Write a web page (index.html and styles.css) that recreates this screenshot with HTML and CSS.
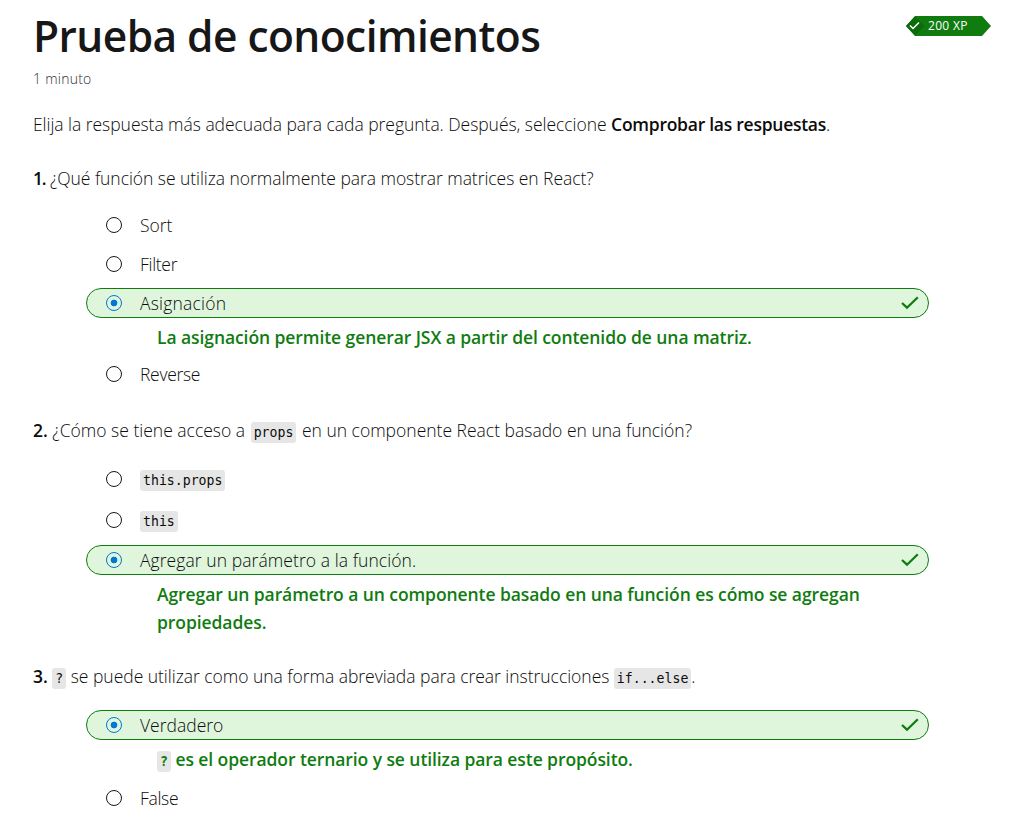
FILE: index.html
```html
<!DOCTYPE html>
<html lang="es">
<head>
<meta charset="utf-8">
<title>Prueba de conocimientos</title>
<link rel="stylesheet" href="styles.css">
</head>
<body>
<main class="page">
  <header class="head">
    <h1 class="title">Prueba de conocimientos</h1>
    <div class="xp">
      <svg class="xp-shape" width="85" height="20" viewBox="0 0 85 20"><path d="M9 0H76L85 10L76 20H9L0 10Z" fill="#107c10"/><path d="M9 0.500L18.500 10L9 19.500L0 10Z" fill="#0b6a0b"/><path d="M4 9.500L7 12.500L13 6.500" fill="none" stroke="#fff" stroke-width="1.500"/></svg>
      <span class="xp-label">200 XP</span>
    </div>
  </header>
  <p class="time">1 minuto</p>
  <p class="intro">Elija la respuesta más adecuada para cada pregunta. Después, seleccione <b class="action">Comprobar las respuestas</b>.</p>

  <section class="question q1">
    <p class="ask"><b class="number">1.</b> ¿Qué función se utiliza normalmente para mostrar matrices en React?</p>
    <div class="option"><i class="radio"></i><span>Sort</span></div>
    <div class="option"><i class="radio"></i><span class="tight">Filter</span></div>
    <div class="option correct"><i class="radio on"></i><span class="wide">Asignación</span><svg class="tick" width="18" height="14" viewBox="0 0 18 14"><path d="M1 7L6 11.700L16.800 1.200" fill="none" stroke="#107c10" stroke-width="2.300"/></svg></div>
    <p class="feedback">La asignación permite generar JSX a partir del contenido de una matriz.</p>
    <div class="option"><i class="radio"></i><span class="tight">Reverse</span></div>
  </section>

  <section class="question q2">
    <p class="ask"><b>2.</b> <span>¿Cómo se tiene acceso a</span> <code>props</code> <span>en un componente React basado en una función?</span></p>
    <div class="option"><i class="radio"></i><code>this.props</code></div>
    <div class="option"><i class="radio"></i><code>this</code></div>
    <div class="option correct"><i class="radio on"></i><span class="wider-line">Agregar un parámetro a la función.</span><svg class="tick" width="18" height="14" viewBox="0 0 18 14"><path d="M1 7L6 11.700L16.800 1.200" fill="none" stroke="#107c10" stroke-width="2.300"/></svg></div>
    <p class="feedback">Agregar un parámetro a un componente basado en una función es cómo se agregan<br>propiedades.</p>
  </section>

  <section class="question q3">
    <p class="ask"><b>3.</b> <code>?</code> se puede utilizar como una forma abreviada para crear instrucciones <code>if...else</code>.</p>
    <div class="option correct"><i class="radio on"></i><span>Verdadero</span><svg class="tick" width="18" height="14" viewBox="0 0 18 14"><path d="M1 7L6 11.700L16.800 1.200" fill="none" stroke="#107c10" stroke-width="2.300"/></svg></div>
    <p class="feedback"><code>?</code> es el operador ternario y se utiliza para este propósito.</p>
    <div class="option"><i class="radio"></i><span class="tight">False</span></div>
  </section>
</main>
</body>
</html>
```
FILE: styles.css
```css
* { box-sizing: border-box; }
body { margin: 0; background: #fff; color: #0c0c0c; font: 300 17.5px/28px "Open Sans", "Noto Sans", sans-serif; overflow: hidden; height: 827px; }
p, h1 { margin: 0; }
b { font-weight: 600; }
.page { padding: 8px 28px 0 33px; }
.head { display: flex; justify-content: space-between; height: 56px; }
.title { font-size: 42.5px; font-weight: 600; line-height: 56px; letter-spacing: -0.57px; color: #171717; white-space: nowrap; }
.xp { position: relative; width: 85px; height: 20px; margin-top: 8px; }
.xp-shape { display: block; }
.xp-label { position: absolute; left: 22px; top: 0; font-size: 12px; line-height: 20px; letter-spacing: 0.3px; color: #fff; font-weight: 400; white-space: nowrap; }
.time { margin-top: 5px; font-size: 14px; line-height: 20px; letter-spacing: 0.25px; color: #303030; }
.intro { margin-top: 21px; letter-spacing: -0.04px; white-space: nowrap; }
.action { letter-spacing: -0.26px; }
.ask { height: 28px; margin-bottom: 20px; white-space: nowrap; }
.q1 { padding-top: 26px; }
.q2, .q3 { padding-top: 18px; }
.q1 .ask { margin-bottom: 18px; letter-spacing: -0.05px; }
.q3 .ask { letter-spacing: -0.03px; }
.number { letter-spacing: -1.2px; }
.option { display: flex; align-items: center; width: 843px; height: 30px; margin: 0 0 9px 53px; padding: 0 9px 0 19px; border: 1px solid transparent; border-radius: 15px; }
.q2 .option { margin-bottom: 11px; }
.q2 .option:nth-child(3) { margin-bottom: 10px; }
.option.correct, .q2 .option.correct { background: #dff6dd; border-color: #107c10; margin-bottom: 5px; }
.tight { letter-spacing: -0.3px; }
.wide { letter-spacing: 0.2px; }
.wider-line { letter-spacing: 0.07px; }
.radio { width: 16px; height: 16px; margin-right: 18px; border: 1.500px solid #171717; border-radius: 50%; }
.on { border-color: #0078d4; background: radial-gradient(circle, #0078d4 3px, transparent 3.700px); }
.tick { margin-left: auto; }
.feedback { margin: 0 0 8px 124px; font-weight: 600; color: #107c10; letter-spacing: -0.08px; white-space: nowrap; }
.q3 .feedback { margin-bottom: 10px; }
code { font: 400 13.200px/15px "DejaVu Sans Mono", monospace; letter-spacing: 0; background: #e6e6e6; border-radius: 3px; padding: 3px; }
.ask span + code { margin: 0 1px; }
.option code { margin-top: 2px; }
.feedback code { font-weight: 700; }
```
